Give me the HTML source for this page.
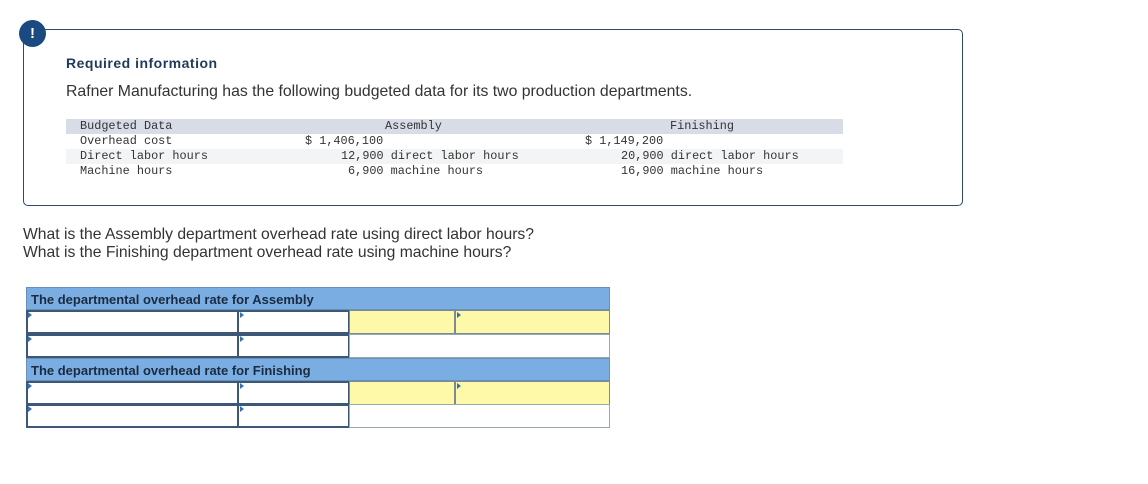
<!DOCTYPE html>
<html><head><style>
body{margin:0;width:1148px;height:484px;background:#fff;position:relative;font-family:"Liberation Sans",sans-serif;overflow:hidden}
.a{position:absolute;white-space:pre}
.m{font-family:"Liberation Mono",monospace;font-size:11.85px;color:#333;line-height:15px}
.box{position:absolute;left:23px;top:29px;width:938px;height:175px;border:1px solid #2d4a6a;border-radius:5px}
.ic{position:absolute;left:19px;top:20px;width:27px;height:27px;border-radius:50%;background:#1b4a80;color:#fff;font-weight:bold;font-size:15px;text-align:center;line-height:27px}
.sh{position:absolute;left:66px;width:777px;height:15px}
.c{position:absolute;box-sizing:border-box}
.hd{background:#7aaee2;border:1px solid #6a8fb8;font-size:13px;color:#1a2a40;font-weight:bold;padding:4px 0 0 4px;font-family:"Liberation Sans",sans-serif}
.in{background:#fff;border:2px solid #3d5876}
.y{background:#fdf9a8;border:1px solid #7a8a9a}
.w{background:#fff;border:1px solid #9aa}
.t{position:absolute;width:0;height:0;border-top:3px solid transparent;border-bottom:3px solid transparent;border-left:4px solid #3a70b0}
</style></head><body>
<div class="box"></div>
<div class="ic">!</div>
<div class="a" style="left:66px;top:55px;font-size:14px;font-weight:bold;color:#1f3b5c;letter-spacing:0.5px">Required information</div>
<div class="a" style="left:66px;top:83px;font-size:15.8px;color:#333">Rafner Manufacturing has the following budgeted data for its two production departments.</div>
<div class="sh" style="top:119px;background:#d8dce6"></div>
<div class="sh" style="top:149px;background:#f3f4f6"></div>
<div class="a m" style="left:80px;top:119px">Budgeted Data
Overhead cost
Direct labor hours
Machine hours</div>
<div class="a m" style="left:385px;top:119px">Assembly</div>
<div class="a m" style="left:305px;top:134px">$ 1,406,100</div>
<div class="a m" style="left:341px;top:149px">12,900 direct labor hours</div>
<div class="a m" style="left:348px;top:164px">6,900 machine hours</div>
<div class="a m" style="left:670px;top:119px">Finishing</div>
<div class="a m" style="left:585px;top:134px">$ 1,149,200</div>
<div class="a m" style="left:621px;top:149px">20,900 direct labor hours</div>
<div class="a m" style="left:621px;top:164px">16,900 machine hours</div>
<div class="a" style="left:23px;top:226px;font-size:15.7px;color:#333;line-height:18px">What is the Assembly department overhead rate using direct labor hours?
What is the Finishing department overhead rate using machine hours?</div>

<div class="c hd" style="left:26px;top:287px;width:584px;height:23px">The departmental overhead rate for Assembly</div>
<div class="c in" style="left:26px;top:310px;width:213px;height:24px"></div>
<div class="c in" style="left:237px;top:310px;width:113px;height:24px"></div>
<div class="c y" style="left:349px;top:310px;width:106px;height:24px"></div>
<div class="c y" style="left:455px;top:310px;width:155px;height:24px"></div>
<div class="c in" style="left:26px;top:334px;width:213px;height:24px"></div>
<div class="c in" style="left:237px;top:334px;width:113px;height:24px"></div>
<div class="c w" style="left:349px;top:334px;width:261px;height:24px"></div>
<div class="c hd" style="left:26px;top:358px;width:584px;height:23px">The departmental overhead rate for Finishing</div>
<div class="c in" style="left:26px;top:381px;width:213px;height:24px"></div>
<div class="c in" style="left:237px;top:381px;width:113px;height:24px"></div>
<div class="c y" style="left:349px;top:381px;width:106px;height:24px"></div>
<div class="c y" style="left:455px;top:381px;width:155px;height:24px"></div>
<div class="c in" style="left:26px;top:404px;width:213px;height:24px"></div>
<div class="c in" style="left:237px;top:404px;width:113px;height:24px"></div>
<div class="c w" style="left:349px;top:404px;width:261px;height:24px"></div>
<div class="t" style="left:28px;top:312px"></div><div class="t" style="left:240px;top:312px"></div><div class="t" style="left:457px;top:312px"></div>
<div class="t" style="left:28px;top:336px"></div><div class="t" style="left:240px;top:336px"></div>
<div class="t" style="left:28px;top:383px"></div><div class="t" style="left:240px;top:383px"></div><div class="t" style="left:457px;top:383px"></div>
<div class="t" style="left:28px;top:406px"></div><div class="t" style="left:240px;top:406px"></div>
</body></html>
